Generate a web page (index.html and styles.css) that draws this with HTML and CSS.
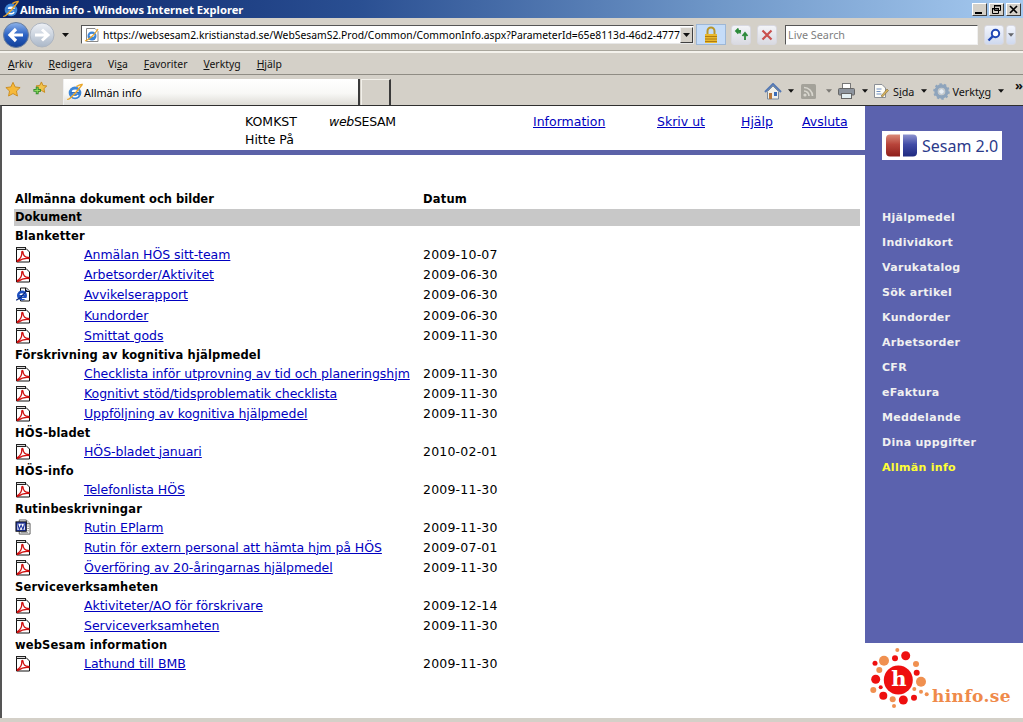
FILE: index.html
```html
<!DOCTYPE html>
<html lang="sv">
<head>
<meta charset="utf-8">
<title>Allmän info</title>
<link rel="stylesheet" href="styles.css">
</head>
<body>
<svg class="defs" width="0" height="0">
  <defs>
    <linearGradient id="blueball" x1="0" y1="0" x2="0" y2="1"><stop offset="0" stop-color="#8fb4ea"/><stop offset=".5" stop-color="#2b62c4"/><stop offset="1" stop-color="#123f96"/></linearGradient>
    <linearGradient id="greyball" x1="0" y1="0" x2="0" y2="1"><stop offset="0" stop-color="#eef1f6"/><stop offset="1" stop-color="#aab7c8"/></linearGradient>
    <linearGradient id="redlogo" x1="0" y1="0" x2="0" y2="1"><stop offset="0" stop-color="#d98a78"/><stop offset=".45" stop-color="#b8443a"/><stop offset="1" stop-color="#8e1f1a"/></linearGradient>
    <linearGradient id="bluelogo" x1="0" y1="0" x2="0" y2="1"><stop offset="0" stop-color="#8d93cf"/><stop offset=".45" stop-color="#414ca6"/><stop offset="1" stop-color="#1f2a80"/></linearGradient>
    <symbol id="pdf" viewBox="0 0 16 17">
      <path d="M1.500 2.500H11L14.500 6V16H1.500z" fill="#fff" stroke="#111" stroke-width="1"/>
      <rect x="1" y="1" width="10" height="3" fill="#222"/><rect x="2" y="2" width="8" height="1" fill="#ddd"/>
      <path d="M2.500 14.500C5 13 7 9.500 6.800 6.300c-.1-1.300 1.200-1.300 1.200 0C8 9 10 11.600 13.500 11.500c1 0 1 1-.2 1C10 12.300 6.500 12.800 3.400 15.300c-1 .6-1.500-.2-.9-.8z" fill="none" stroke="#d01010" stroke-width="1.300"/>
    </symbol>
    <symbol id="ie" viewBox="0 0 16 16">
      <path d="M5.500 1.500H11.500L14.500 4.500V14.500H5.500z" fill="#fff" stroke="#111"/>
      <path d="M10.500 1.500V5H14.500" fill="#ddd" stroke="#111"/>
      <circle cx="7" cy="9" r="5" fill="#1d4fc0"/>
      <ellipse cx="7" cy="8.500" rx="2.600" ry="1.800" fill="#fff"/><rect x="3.500" y="8.500" width="7" height="1.200" fill="#1d4fc0"/><path d="M7 11.500h4v1H7z" fill="#fff"/>
      <path d="M1 13.500C3 13.500 9 8 12 3.500" stroke="#0b2a7a" fill="none" stroke-width="1.200"/>
    </symbol>
    <symbol id="word" viewBox="0 0 17 17">
      <path d="M4.500 .5H12L16 4.500V15.500H4.500z" fill="#fff" stroke="#555"/>
      <path d="M12 .5V4.500H16" fill="#ddd" stroke="#555"/>
      <rect x="1" y="2.500" width="11" height="10" fill="#1a2f9c" stroke="#111"/>
      <rect x="2.500" y="4.500" width="8" height="6.500" fill="#fff"/>
      <path d="M3 5l1.600 5.500L6.500 6l1.900 4.500L10 5" stroke="#1a2f9c" stroke-width="1.200" fill="none"/>
      <path d="M13 7h2M13 9.500h2M13 12h2M6 14h8" stroke="#888"/>
    </symbol>
    <symbol id="eglobe" viewBox="0 0 20 20">
      <circle cx="10" cy="11" r="7" fill="#3d86d8"/>
      <ellipse cx="10.300" cy="9.800" rx="3.800" ry="2.500" fill="#fff"/>
      <rect x="5" y="10" width="10" height="1.700" fill="#2f71c4"/>
      <path d="M6.500 14c2 1.800 5.500 1.800 7-.5" stroke="#fff" stroke-width="1.600" fill="none"/>
      <path d="M1.500 18C3 19 8 14 13 8c3-3.500 6-7 4.500-6.500-1.500.2-4 1.200-6 2.400" stroke="#e9a62a" stroke-width="1.600" fill="none"/>
    </symbol>
    <symbol id="caret" viewBox="0 0 7 4"><path d="M0 0H7L3.500 4z" fill="#111"/></symbol>
  </defs>
</svg>

<header class="titlebar">
  <svg class="title-icon" width="18" height="18"><use href="#eglobe"/></svg>
  <span class="title-text">Allmän info - Windows Internet Explorer</span>
  <div class="winbtns">
    <span class="winbtn"><svg width="13" height="13"><rect x="2" y="9" width="7" height="2" fill="#000"/></svg></span>
    <span class="winbtn"><svg width="13" height="13"><path d="M4.500 2.500h6v5h-6zM2.500 5.500h6v5h-6z" fill="#d4d0c8" stroke="#000"/><path d="M4 2h7v1.500H4zM2 5h7v1.500H2z"/></svg></span>
    <span class="winbtn"><svg width="13" height="13"><path d="M3 3l7 7M10 3l-7 7" stroke="#000" stroke-width="1.700"/></svg></span>
  </div>
</header>

<div class="addressbar">
  <svg class="nav-icon" width="54" height="28" viewBox="0 0 54 28">
    <circle cx="40" cy="14" r="12" fill="url(#greyball)" stroke="#aeb5c0"/>
    <path d="M33 14h13M40 8.500l6 5.500-6 5.500" fill="none" stroke="#fff" stroke-width="3"/>
    <circle cx="14" cy="14" r="12.500" fill="url(#blueball)" stroke="#6a7f9e"/>
    <path d="M21 14H8M14 8l-6 6 6 6" fill="none" stroke="#fff" stroke-width="3.200"/>
  </svg>
  <svg class="nav-caret" width="7" height="4"><use href="#caret"/></svg>
  <div class="urlbox">
    <svg class="url-icon" width="16" height="16" viewBox="0 0 16 16"><path d="M2.500 1.500H11L14 4.500V14.500H2.500z" fill="#fff" stroke="#888"/><circle cx="8" cy="9" r="4.500" fill="#3d86d8"/><ellipse cx="8" cy="8.300" rx="2.500" ry="1.600" fill="#fff"/><path d="M1 14C5 13 11 7 14 2" stroke="#e9a62a" stroke-width="1.200" fill="none"/></svg>
    <span class="url-text">https://websesam2.kristianstad.se/WebSesamS2.Prod/Common/CommonInfo.aspx?ParameterId=65e8113d-46d2-4777</span>
    <span class="url-drop"><svg width="7" height="4"><use href="#caret"/></svg></span>
  </div>
  <div class="lockbtn"><svg width="14" height="18" viewBox="0 0 14 18"><path d="M3.500 8V5a3.500 3.500 0 0 1 7 0v3" fill="none" stroke="#b8962a" stroke-width="2"/><rect x="1" y="8" width="12" height="9" fill="#e8b72e"/><path d="M1 10.500h12M1 13h12M1 15.500h12" stroke="#b07d10"/></svg></div>
  <div class="toolbtn refresh"><svg width="15" height="13" viewBox="0 0 15 13"><path d="M7 3H3M4.500 .5L2 3l2.500 2.500" fill="none" stroke="#2c8a3a" stroke-width="1.800"/><path d="M3 3.500c2 0 3 .5 3.500 2" fill="none" stroke="#2c8a3a" stroke-width="1.500"/><path d="M11 12V6M8.500 8l2.500-3 2.500 3" fill="none" stroke="#2c8a3a" stroke-width="1.800"/></svg></div>
  <div class="toolbtn stop"><svg width="12" height="12" viewBox="0 0 12 12"><path d="M1.500 1.500l9 9M10.500 1.500l-9 9" stroke="#c9504e" stroke-width="2.200"/></svg></div>
  <div class="searchbox">Live Search</div>
  <div class="toolbtn magbtn"><svg width="14" height="14" viewBox="0 0 14 14"><circle cx="8.500" cy="5.500" r="3.700" fill="#fff" stroke="#1f46b4" stroke-width="2"/><path d="M6 8l-4.500 4.500" stroke="#1f46b4" stroke-width="2.400"/></svg></div>
  <div class="toolbtn magdrop"><svg width="6" height="4"><use href="#caret"/></svg></div>
</div>

<nav class="menubar">
  <span class="menu-item"><u>A</u>rkiv</span>
  <span class="menu-item"><u>R</u>edigera</span>
  <span class="menu-item">Vi<u>s</u>a</span>
  <span class="menu-item"><u>F</u>avoriter</span>
  <span class="menu-item"><u>V</u>erktyg</span>
  <span class="menu-item"><u>H</u>jälp</span>
</nav>

<div class="tabbar">
  <svg class="fav-star" width="16" height="16" viewBox="0 0 18 17"><path d="M9 1l2.400 5.200 5.600.7-4.100 3.900 1.100 5.600L9 13.600 4 16.400l1.100-5.600L1 6.900l5.600-.7z" fill="#f6b93a" stroke="#c98a1c"/></svg>
  <svg class="fav-add" width="16" height="16" viewBox="0 0 17 17"><path d="M10 1l1.700 3.800 4 .5-3 2.800.8 4L10 10l-3.500 2 .8-4-3-2.800 4-.5z" fill="#f0c24c" stroke="#c98a1c"/><path d="M5.500 6v8M1.500 10h8" stroke="#2f8f2a" stroke-width="3"/><path d="M5.500 7v6M2.500 10h6" stroke="#9be36a" stroke-width="1"/></svg>
  <div class="tab">
    <svg width="18" height="18"><use href="#eglobe"/></svg>
    <span>Allmän info</span>
  </div>
  <div class="newtab"></div>
  <div class="cmdbar">
    <svg class="cmd-home" width="18" height="17" viewBox="0 0 18 17"><path d="M1 9L9 1l8 8" fill="none" stroke="#5478b4" stroke-width="2"/><path d="M3.500 8.500L9 3l5.500 5.500V16h-11z" fill="#f0f0ea" stroke="#7a8a9c"/><rect x="10" y="9" width="3" height="4" fill="#3a6cb8"/><rect x="5" y="10" width="3" height="6" fill="#b9783a"/></svg>
    <svg class="cmd-caret first" width="6" height="4"><use href="#caret"/></svg>
    <svg class="cmd-rss" width="15" height="15" viewBox="0 0 15 15"><rect width="15" height="15" rx="1.500" fill="#a4a29a"/><circle cx="4" cy="11" r="1.600" fill="#d8d6ce"/><path d="M3 7a5 5 0 0 1 5 5M3 3.500a8.500 8.500 0 0 1 8.500 8.500" fill="none" stroke="#d8d6ce" stroke-width="1.700"/></svg>
    <svg class="cmd-caret dim" width="6" height="4"><use href="#caret"/></svg>
    <svg class="cmd-print" width="17" height="16" viewBox="0 0 17 16"><rect x="4.500" y=".5" width="8" height="6" fill="#fff" stroke="#777"/><rect x=".5" y="5.500" width="16" height="6.500" rx="1" fill="#8d949e" stroke="#666"/><rect x="3.500" y="10.500" width="10" height="5" fill="#e4f0f4" stroke="#666"/></svg>
    <svg class="cmd-caret" width="6" height="4"><use href="#caret"/></svg>
    <svg class="cmd-page" width="16" height="16" viewBox="0 0 16 16"><path d="M1.500 1.500H9L12.500 5v9.500h-11z" fill="#fdfdf8" stroke="#8b8f96"/><path d="M3.500 6h5M3.500 8.500h4M3.500 11h5" stroke="#6f8fc2"/><path d="M8 13l6-7 1.500 1.500-6 6.500z" fill="#d9b25c" stroke="#7a6a3a" stroke-width=".6"/></svg>
    <span class="cmd-label sida">S<u>i</u>da</span>
    <svg class="cmd-caret" width="6" height="4"><use href="#caret"/></svg>
    <svg class="cmd-gear" width="17" height="17" viewBox="0 0 17 17"><circle cx="8.500" cy="8.500" r="5.500" fill="none" stroke="#8ea4bc" stroke-width="3.400"/><circle cx="8.500" cy="8.500" r="7.400" fill="none" stroke="#8ea4bc" stroke-width="1.800" stroke-dasharray="2.400 2.250"/><circle cx="8.500" cy="8.500" r="2.800" fill="#e8edf2" stroke="#b8c4d0"/></svg>
    <span class="cmd-label verktyg">Verkt<u>y</u>g</span>
    <svg class="cmd-caret" width="6" height="4"><use href="#caret"/></svg>
    <span class="cmd-more">»</span>
  </div>
</div>

<div class="page">
  <main class="main">
    <div class="top">
      <div>KOMKST<br>Hitte På</div>
      <div class="appname"><i>web</i>SESAM</div>
      <a href="#">Information</a>
      <a href="#">Skriv ut</a>
      <a href="#">Hjälp</a>
      <a href="#">Avsluta</a>
    </div>
    <div class="rule"></div>
    <div class="docs">
      <div class="row head"><span class="wide">Allmänna dokument och bilder</span><span class="datum">Datum</span></div>
      <div class="section">Dokument</div>
      <div class="group">Blanketter</div>
      <div class="row"><svg class="ic"><use href="#pdf"/></svg><a href="#">Anmälan HÖS sitt-team</a><span>2009-10-07</span></div>
      <div class="row"><svg class="ic"><use href="#pdf"/></svg><a href="#">Arbetsorder/Aktivitet</a><span>2009-06-30</span></div>
      <div class="row tall"><svg class="ic"><use href="#ie"/></svg><a href="#">Avvikelserapport</a><span>2009-06-30</span></div>
      <div class="row"><svg class="ic"><use href="#pdf"/></svg><a href="#">Kundorder</a><span>2009-06-30</span></div>
      <div class="row"><svg class="ic"><use href="#pdf"/></svg><a href="#">Smittat gods</a><span>2009-11-30</span></div>
      <div class="group">Förskrivning av kognitiva hjälpmedel</div>
      <div class="row"><svg class="ic"><use href="#pdf"/></svg><a href="#">Checklista inför utprovning av tid och planeringshjm</a><span>2009-11-30</span></div>
      <div class="row"><svg class="ic"><use href="#pdf"/></svg><a href="#">Kognitivt stöd/tidsproblematik checklista</a><span>2009-11-30</span></div>
      <div class="row"><svg class="ic"><use href="#pdf"/></svg><a href="#">Uppföljning av kognitiva hjälpmedel</a><span>2009-11-30</span></div>
      <div class="group">HÖS-bladet</div>
      <div class="row"><svg class="ic"><use href="#pdf"/></svg><a href="#">HÖS-bladet januari</a><span>2010-02-01</span></div>
      <div class="group">HÖS-info</div>
      <div class="row"><svg class="ic"><use href="#pdf"/></svg><a href="#">Telefonlista HÖS</a><span>2009-11-30</span></div>
      <div class="group">Rutinbeskrivningar</div>
      <div class="row"><svg class="ic"><use href="#word"/></svg><a href="#">Rutin EPlarm</a><span>2009-11-30</span></div>
      <div class="row"><svg class="ic"><use href="#pdf"/></svg><a href="#">Rutin för extern personal att hämta hjm på HÖS</a><span>2009-07-01</span></div>
      <div class="row"><svg class="ic"><use href="#pdf"/></svg><a href="#">Överföring av 20-åringarnas hjälpmedel</a><span>2009-11-30</span></div>
      <div class="group">Serviceverksamheten</div>
      <div class="row"><svg class="ic"><use href="#pdf"/></svg><a href="#">Aktiviteter/AO för förskrivare</a><span>2009-12-14</span></div>
      <div class="row"><svg class="ic"><use href="#pdf"/></svg><a href="#">Serviceverksamheten</a><span>2009-11-30</span></div>
      <div class="group">webSesam information</div>
      <div class="row"><svg class="ic"><use href="#pdf"/></svg><a href="#">Lathund till BMB</a><span>2009-11-30</span></div>
    </div>
  </main>
  <aside class="side">
    <div class="side-blue">
      <div class="brand">
        <svg width="33" height="23" viewBox="0 0 33 23"><path d="M5 .5h10v22H5a4 4 0 0 1-4-4V4.500a4 4 0 0 1 4-4z" fill="url(#redlogo)"/><path d="M18 .5h10a4 4 0 0 1 4 4v14a4 4 0 0 1-4 4H18z" fill="url(#bluelogo)"/></svg>
        <span>Sesam 2.0</span>
      </div>
      <ul class="sidenav">
        <li>Hjälpmedel</li>
        <li>Individkort</li>
        <li>Varukatalog</li>
        <li>Sök artikel</li>
        <li>Kundorder</li>
        <li>Arbetsorder</li>
        <li>CFR</li>
        <li>eFaktura</li>
        <li>Meddelande</li>
        <li>Dina uppgifter</li>
        <li class="current">Allmän info</li>
      </ul>
    </div>
    <div class="hinfo">
      <svg class="hinfo-mark" width="66" height="70" viewBox="0 0 66 70">
        <g fill="#ee0f0f">
          <circle cx="33.300" cy="37" r="14.500"/>
          <circle cx="40.700" cy="12.700" r="4.500"/><circle cx="30" cy="15.300" r="3"/><circle cx="10" cy="20.300" r="2.500"/><circle cx="51.700" cy="29.700" r="3"/><circle cx="10.700" cy="36.300" r="4.500"/><circle cx="15.700" cy="44.300" r="2"/><circle cx="18.300" cy="52.700" r="4"/><circle cx="38.300" cy="57" r="4.500"/><circle cx="49" cy="54.700" r="3"/>
        </g>
        <g fill="#f09050">
          <circle cx="32.300" cy="7" r="2"/><circle cx="19" cy="17.700" r="5"/><circle cx="51" cy="21" r="3"/><circle cx="14.300" cy="27" r="3"/><circle cx="56" cy="38.700" r="5"/><circle cx="8.300" cy="47" r="3"/><circle cx="49.300" cy="46" r="2"/><circle cx="56" cy="48.700" r="2"/><circle cx="61.700" cy="51.300" r="2"/><circle cx="27.700" cy="56.300" r="3"/><circle cx="29" cy="63" r="2"/>
        </g>
      </svg>
      <span class="hinfo-h">h</span>
      <span class="hinfo-name">hinfo.se</span>
    </div>
  </aside>
</div>
<div class="statusstrip"></div>
</body>
</html>
```
FILE: styles.css
```css
* { box-sizing: border-box; }
html, body { margin: 0; padding: 0; }
body {
  width: 1023px;
  height: 722px;
  overflow: hidden;
  background: #d4d0c8;
  font-family: "DejaVu Sans", Verdana, sans-serif;
  font-size: 12.5px;
  color: #000;
}
svg { display: block; flex: none; }
.defs { position: absolute; }

/* window chrome */
.titlebar {
  height: 18px;
  display: flex;
  align-items: center;
  background: linear-gradient(90deg, #0a246a 0%, #2a4f92 35%, #6f97c8 70%, #a6caf0 100%);
  padding-left: 2px;
}
.title-text {
  color: #fff;
  font: bold 11.2px "Noto Sans", sans-serif;
  white-space: nowrap;
}
.winbtns { margin-left: auto; display: flex; gap: 2px; padding-right: 2px; }
.winbtn {
  width: 15px;
  height: 13px;
  background: #d4d0c8;
  border: 1px solid;
  border-color: #fff #404040 #404040 #fff;
  display: flex;
  align-items: center;
  justify-content: center;
}
.addressbar {
  height: 35px;
  display: flex;
  align-items: center;
  padding-left: 2px;
  border-bottom: 2px solid #f4f2ec;
  box-shadow: inset 0 -1px 0 #a9a69d;
}
.nav-caret { margin-left: 6px; }
.urlbox {
  margin-left: 12px;
  width: 613px;
  height: 19px;
  background: #fff;
  border: 1px solid;
  border-color: #555 #e8e8e8 #e8e8e8 #555;
  display: flex;
  align-items: center;
  padding-left: 2px;
}
.url-text {
  font: 10.35px "Noto Sans", sans-serif;
  white-space: nowrap;
  width: 578px;
  margin-left: 3px;
}
.url-drop {
  width: 14px;
  height: 16px;
  margin-left: auto;
  background: #d4d0c8;
  border: 1px solid;
  border-color: #eee #404040 #404040 #eee;
  display: flex;
  align-items: center;
  justify-content: center;
}
.lockbtn {
  margin-left: 2px;
  width: 30px;
  height: 21px;
  background: #c5dcf8;
  border: 1px solid #9db7d6;
  display: flex;
  align-items: center;
  justify-content: center;
}
.toolbtn {
  height: 20px;
  background: linear-gradient(#f3f4f8, #d9dae2);
  border: 1px solid #d8d8e0;
  border-radius: 3px;
  display: flex;
  align-items: center;
  justify-content: center;
}
.refresh { width: 20px; margin-left: 5px; }
.stop { width: 20px; margin-left: 6px; }
.searchbox {
  margin-left: 8px;
  width: 193px;
  height: 20px;
  background: #fff;
  border: 1px solid;
  border-color: #555 #f0f0f0 #f0f0f0 #555;
  color: #808080;
  font: 10.8px/18px "Noto Sans", sans-serif;
  padding-left: 2px;
}
.magbtn { width: 20px; margin-left: 6px; background: linear-gradient(#f3f6fd, #cfd9ee); }
.magdrop { width: 10px; margin-left: 2px; background: linear-gradient(#f3f6fd, #cfd9ee); }
.magdrop svg { opacity: .6; }

.menubar {
  height: 22px;
  display: flex;
  align-items: center;
  padding: 1px 0 0 8px;
  gap: 16px;
  font: 10.4px "Noto Sans", sans-serif;
  border-bottom: 1px solid #8f8c84;
  color: #111;
}
.tabbar {
  height: 30px;
  display: flex;
  align-items: flex-end;
}
.fav-star { margin: 0 0 8px 5px; }
.fav-add { margin: 0 0 8px 11px; }
.tab {
  margin-left: 15px;
  width: 297px;
  height: 26px;
  background: linear-gradient(#fff, #f8f8f6 55%, #dedcd6);
  border-left: 1px solid #eee;
  border-right: 2px solid #3a3a3a;
  display: flex;
  align-items: center;
  padding-left: 2px;
  font: 10.8px "Noto Sans", sans-serif;
}
.newtab {
  margin-left: 1px;
  width: 30px;
  height: 26px;
  border-top: 1px solid #f2f0ea;
  border-left: 1px solid #f2f0ea;
  border-right: 2px solid #3a3a3a;
}
.cmdbar {
  margin-left: 373px;
  height: 30px;
  display: flex;
  align-items: center;
  padding-top: 2px;
  font: 10.8px "Noto Sans", sans-serif;
  color: #111;
  white-space: nowrap;
}
.cmd-caret { margin-left: 7px; }
.cmd-caret.first { margin-left: 6px; }
.cmd-caret.dim { opacity: .45; margin-left: 10px; }
.cmd-rss { margin-left: 7px; }
.cmd-print { margin-left: 6px; }
.cmd-page { margin-left: 5px; }
.cmd-label { margin-left: 4px; }
.cmd-gear { margin-left: 6px; }
.cmd-label.verktyg { margin-left: 2px; }
.cmd-more { margin: -12px 0 0 11px; font-size: 13px; font-weight: bold; }

/* page */
.page {
  height: 613px;
  display: flex;
  background: #fff;
  border-top: 1px solid #2f2f2f;
  border-left: 2px solid #555;
}
.main { width: 863px; flex: none; }
.top {
  display: grid;
  grid-template-columns: 84px 204px 124px 84px 61px auto;
  padding: 7px 0 0 243px;
  height: 44px;
  line-height: 18px;
  font-size: 12.5px;
}
.appname { letter-spacing: -.3px; }
.top a, .docs a { color: #0000c0; text-decoration: underline; }
.rule { height: 5px; margin-left: 8px; background: #5b62a8; }
.docs { margin: 35px 0 0 13px; font-size: 12.5px; }
.row {
  display: grid;
  grid-template-columns: 69px 339px auto;
  align-items: center;
  height: 20px;
  white-space: nowrap;
}
.row > a { letter-spacing: -.04px; }
.row > span { letter-spacing: .2px; }
.row.tall { height: 21px; }
.row.head { grid-template-columns: 408px auto; height: 18px; font-weight: bold; font-size: 11.5px; }
.row.head > span { letter-spacing: 0; }
.row.head > .datum { letter-spacing: .2px; }
.section {
  height: 17px;
  margin: 1px 5px 0 -1px;
  padding-left: 1px;
  background: #c8c8c8;
  font-weight: bold;
  font-size: 11.5px;
  line-height: 17px;
}
.group { height: 18px; line-height: 20px; font-weight: bold; font-size: 11.5px; letter-spacing: .15px; white-space: nowrap; }
.ic { width: 16px; height: 17px; }

.side { flex: 1; display: flex; flex-direction: column; }
.side-blue { height: 537px; background: #5b62ae; padding: 25px 0 0 17px; }
.brand {
  width: 120px;
  height: 29px;
  background: #fff;
  display: flex;
  align-items: center;
  padding-left: 3px;
  gap: 4px;
  color: #2b3a8a;
  font: 16px "Noto Sans", sans-serif;
  white-space: nowrap;
}
.sidenav {
  list-style: none;
  margin: 45px 0 0;
  padding: 0;
  color: #f0f0f0;
  font-weight: bold;
  font-size: 11px;
  letter-spacing: .3px;
}
.sidenav li { height: 25px; line-height: 25px; }
.sidenav .current { color: #ffff33; }
.hinfo { flex: 1; display: flex; position: relative; background: #fff; }
.hinfo-h {
  position: absolute;
  left: 24px;
  top: 19px;
  width: 20px;
  text-align: center;
  color: #fff;
  font: bold 21px/34px "DejaVu Serif", serif;
}
.hinfo-name {
  position: absolute;
  left: 67px;
  top: 43px;
  color: #ef8a4a;
  font: bold 17px/20px "DejaVu Serif", serif;
  letter-spacing: .4px;
}
.statusstrip { height: 4px; background: #d4d0c8; }
```
